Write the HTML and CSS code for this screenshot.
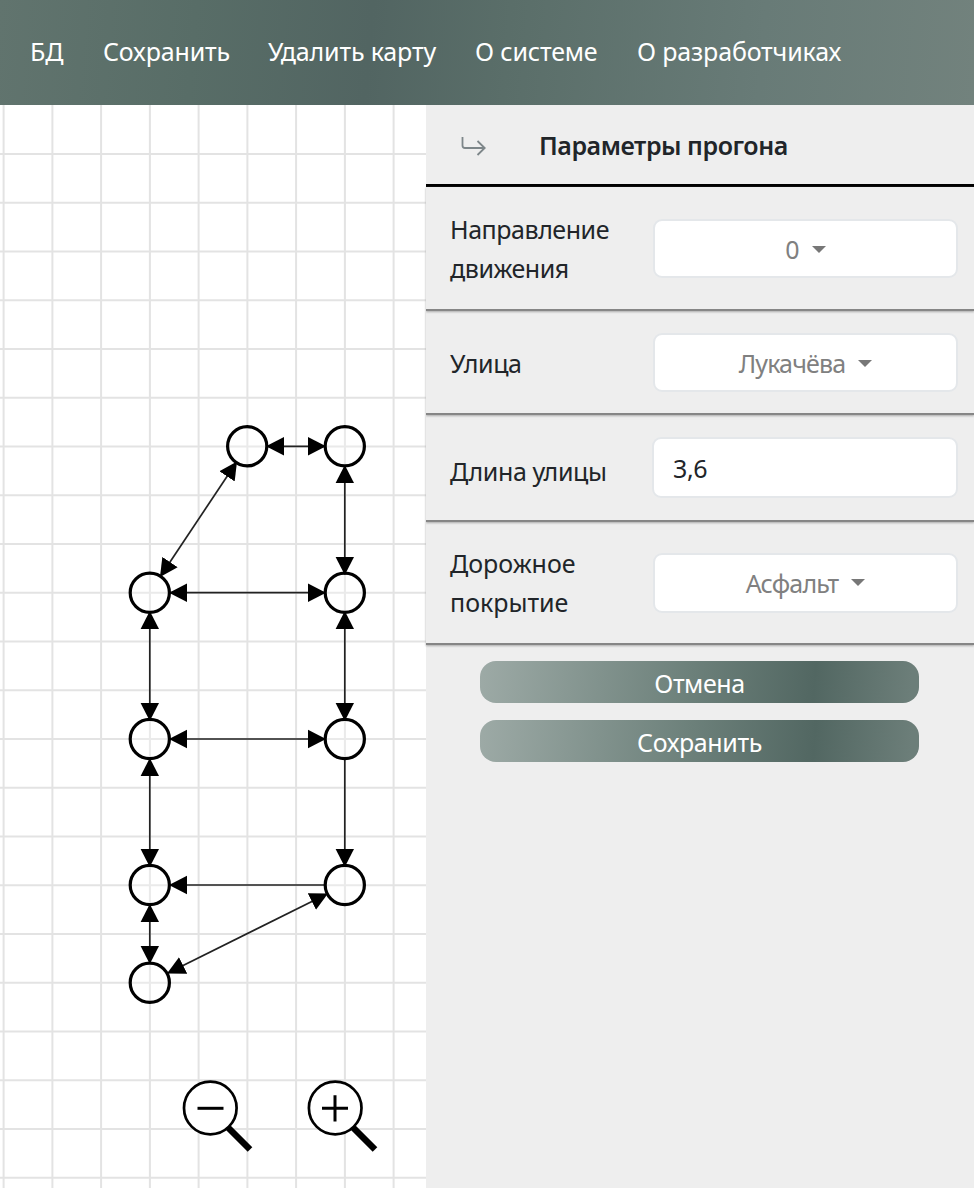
FILE: index.html
```html
<!DOCTYPE html>
<html lang="ru">
<head>
<meta charset="utf-8">
<title>Параметры прогона</title>
<link rel="stylesheet" href="styles.css">
</head>
<body>
<header class="topbar">
  <nav class="nav">
    <a>БД</a><a>Сохранить</a><a>Удалить карту</a><a>О системе</a><a>О разработчиках</a>
  </nav>
</header>
<main class="workspace">
  <section class="map">
    <svg class="map-svg" width="426" height="1083" viewBox="0 105 426 1083">
      <defs>
        <marker id="arrow" viewBox="0 0 18 20" refX="18" refY="10" markerWidth="18" markerHeight="20" orient="auto-start-reverse" markerUnits="userSpaceOnUse">
          <path d="M0 .8L18 10L0 19.2z"/>
        </marker>
      </defs>
      <g class="grid">
        <path d="M3.6 105V1188M52.4 105V1188M101.1 105V1188M149.9 105V1188M198.6 105V1188M247.4 105V1188M296.1 105V1188M344.9 105V1188M393.6 105V1188"/>
        <path d="M0 154H426M0 202.8H426M0 251.5H426M0 300.3H426M0 349H426M0 397.8H426M0 446.5H426M0 495.2H426M0 544H426M0 592.7H426M0 641.5H426M0 690.2H426M0 739H426M0 787.7H426M0 836.5H426M0 885.2H426M0 934H426M0 982.7H426M0 1031.5H426M0 1080.2H426M0 1129H426M0 1177.7H426"/>
      </g>
      <g class="both">
        <path d="M266 446.3H326"/>
        <path d="M344.8 465V575"/>
        <path d="M237 461.5L160 577"/>
        <path d="M169 592.7H326"/>
        <path d="M149.8 611V721"/>
        <path d="M344.8 611V721"/>
        <path d="M169 739H326"/>
        <path d="M149.8 758V867"/>
        <path d="M149.8 904V964"/>
        <path d="M167 973.5L328 893.5"/>
      </g>
      <g class="one">
        <path d="M344.8 758V867"/>
        <path d="M326 885H169"/>
      </g>
      <g class="nodes">
        <circle cx="247.2" cy="446.3" r="19.6"/><circle cx="344.8" cy="446.3" r="19.6"/>
        <circle cx="149.8" cy="592.7" r="19.6"/><circle cx="344.8" cy="592.7" r="19.6"/>
        <circle cx="149.8" cy="739" r="19.6"/><circle cx="344.8" cy="739" r="19.6"/>
        <circle cx="149.8" cy="885" r="19.6"/><circle cx="344.8" cy="885" r="19.6"/>
        <circle cx="149.8" cy="982.7" r="19.6"/>
      </g>
      <g class="lens">
        <circle cx="210.3" cy="1108" r="26.3"/><path d="M197.5 1108.3H223.5"/><path class="handle" d="M228 1127.5L250 1149.5"/>
        <circle cx="335.2" cy="1108" r="26.3"/><path d="M322 1108.3H348M335 1095.2V1121.5"/><path class="handle" d="M353 1127.5L375 1149.5"/>
      </g>
    </svg>
  </section>
  <aside class="panel">
    <div class="panel-head">
      <svg class="back" width="27" height="24" viewBox="0 0 27 24"><path d="M2.5 2V10.5Q2.5 13 5 13H24.5M17.5 6L24.7 13L17.5 20"/></svg>
      <h1>Параметры прогона</h1>
    </div>
    <div class="row direction"><label>Направление<br>движения</label><button class="select"><span>0</span><i></i></button></div>
    <div class="row street"><label>Улица</label><button class="select"><span>Лукачёва</span><i></i></button></div>
    <div class="row length"><label>Длина улицы</label><input class="field" value="3,6"></div>
    <div class="row surface"><label>Дорожное<br>покрытие</label><button class="select"><span>Асфальт</span><i></i></button></div>
    <div class="actions">
      <button class="action">Отмена</button>
      <button class="action">Сохранить</button>
    </div>
  </aside>
</main>
</body>
</html>
```
FILE: styles.css
```css
* { box-sizing: border-box; }
body { margin: 0; width: 974px; height: 1188px; overflow: hidden; background: #fff; color: #212529; font: 25px/39px "Noto Sans", "Open Sans", sans-serif; letter-spacing: -0.4px; }
button, input { font: inherit; letter-spacing: inherit; border: 0; margin: 0; padding: 0; }
.topbar { height: 105px; background: linear-gradient(95deg, #61746e 0%, #586d67 20%, #526562 38%, #5a6e69 52%, #687b77 78%, #72827d 100%); }
.nav { display: grid; grid-template-columns: 73px 165px 207px 162px 1fr; padding: 32px 0 0 30px; color: #fff; white-space: nowrap; letter-spacing: -0.15px; }
.workspace { display: flex; height: 1083px; }
.map { width: 426px; flex: none; }
.map-svg { display: block; }
.grid { stroke: #e3e3e3; stroke-width: 2; }
.both, .one { stroke: #222; stroke-width: 1.7; fill: none; }
.both path { marker-start: url(#arrow); marker-end: url(#arrow); }
.one path { marker-end: url(#arrow); }
marker path { stroke: none; fill: #000; }
.nodes { fill: rgba(255, 255, 255, .25); stroke: #000; stroke-width: 3.2; }
.lens { fill: none; stroke: #000; stroke-width: 3; }
.lens circle { fill: #fff; stroke-width: 2.7; }
.lens .handle { stroke-width: 6.5; }
.panel { flex: 1; background: #eee; }
.panel-head { height: 82px; border-bottom: 3px solid #000; display: flex; align-items: center; padding: 1px 0 0 34px; }
.panel-head h1 { margin: 0 0 0 52px; font-size: 25px; font-weight: 600; white-space: nowrap; letter-spacing: -0.45px; }
.back { fill: none; stroke: #7d8689; stroke-width: 1.8; margin-top: 4px; }
.row { display: grid; grid-template-columns: 203px 305px; align-items: center; padding-left: 24px; border-bottom: 2px solid #858585; box-shadow: 0 1px 2px #aaa; }
.row label { padding-top: 2px; }
.direction { height: 124px; }
.direction label { letter-spacing: -0.45px; }
.street { height: 104px; }
.length { grid-template-columns: 202px 306px; height: 107px; }
.length label { padding-top: 8px; }
.surface { height: 123px; }
.surface label { letter-spacing: 0; padding-top: 0; }
.select, .field { width: 100%; height: 59px; border: 2px solid #e4e7ea; border-radius: 9px; background: #fff; }
.select { display: flex; align-items: center; justify-content: center; gap: 13px; color: #808080; padding-top: 3px; letter-spacing: -0.85px; }
.surface .select { height: 60px; padding-top: 1px; }
.select i { border: 7px solid transparent; border-top-color: #777; border-bottom: 0; margin-top: -1px; }
.field { height: 61px; color: #212529; padding: 0 0 0 19px; }
.actions { display: grid; gap: 17px; padding: 16px 0 0 54px; }
.action { width: 439px; height: 42px; border-radius: 16px; color: #fff; background: linear-gradient(95deg, #9daaa6 0%, #6c807a 48%, #526762 76%, #6c7e79 98%); padding-top: 3px; }
```
